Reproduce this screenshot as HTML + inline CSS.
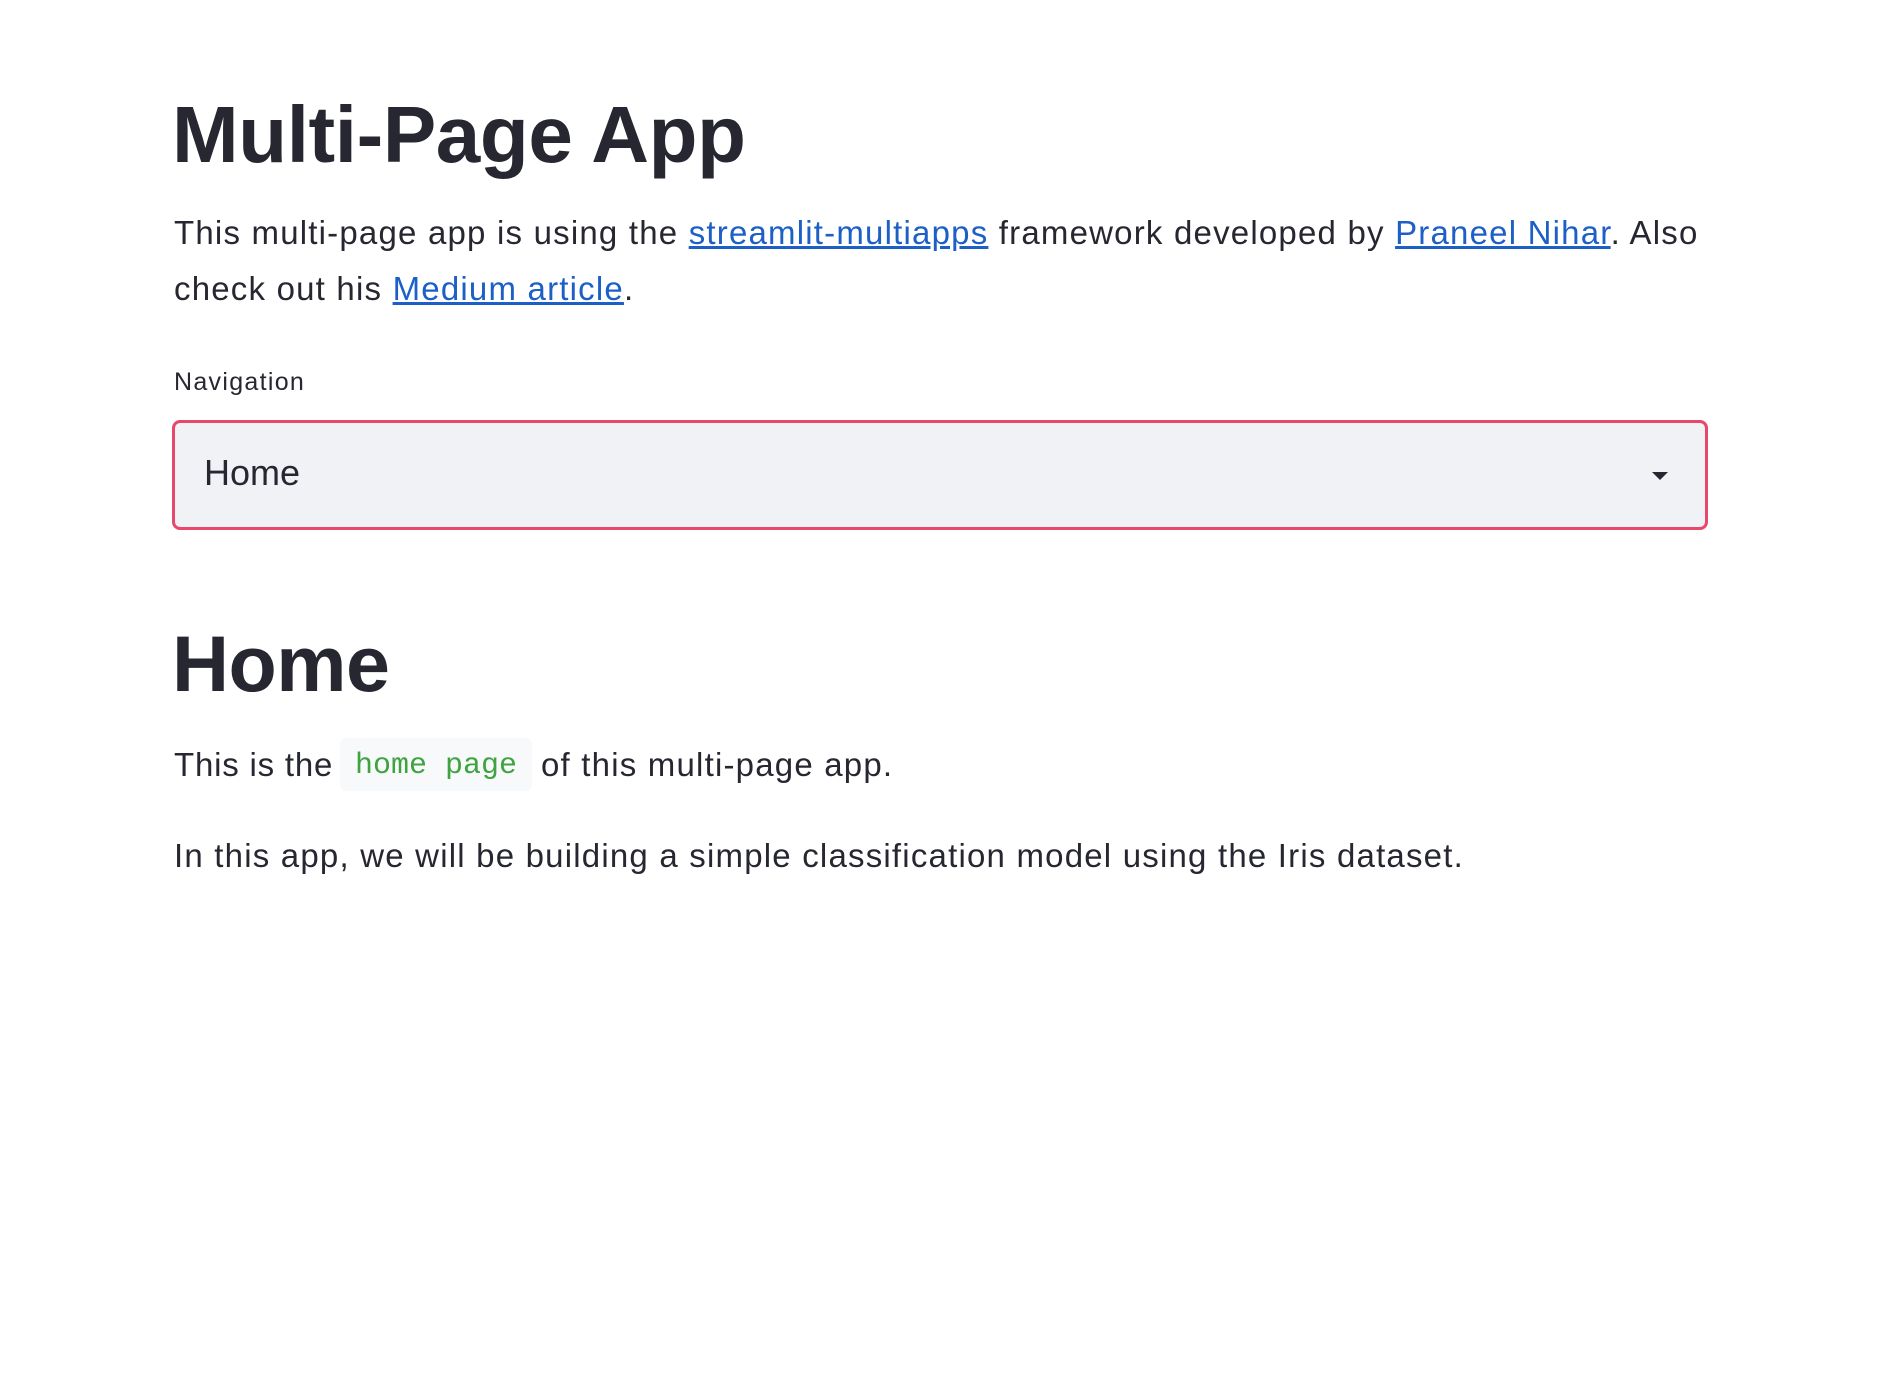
<!DOCTYPE html>
<html><head><meta charset="utf-8"><style>
body{margin:0;width:1900px;height:1400px;background:#fff;color:#262730;font-family:"Liberation Sans",sans-serif;position:relative;overflow:hidden}
.a{position:absolute;white-space:nowrap;line-height:1.117}
a{color:#1c5fc7;text-decoration:underline}
</style></head><body>
<div class="a" style="left:172px;top:90px;font-size:80px;font-weight:bold;letter-spacing:-0.4px">Multi-Page App</div>
<div class="a" style="left:174px;top:205px;font-size:33px;line-height:56px;letter-spacing:1.2px">This multi-page app is using the <a>streamlit-multiapps</a> framework developed by <a>Praneel Nihar</a>. Also<br>check out his <a>Medium article</a>.</div>
<div class="a" style="left:174px;top:369px;font-size:25px;letter-spacing:1.3px">Navigation</div>
<div style="position:absolute;left:172px;top:420px;width:1530px;height:104px;border:3px solid #e8486b;border-radius:8px;background:#f0f2f6"></div>
<div class="a" style="left:204px;top:453px;font-size:36px">Home</div>
<svg style="position:absolute;left:1652px;top:472px" width="16" height="8"><path d="M0 0H16L8 8Z" fill="#262730"/></svg>
<div class="a" style="left:172px;top:620px;font-size:79px;font-weight:bold;letter-spacing:-0.5px">Home</div>
<div class="a" style="left:174px;top:747px;font-size:33px;letter-spacing:0.8px">This is the</div>
<div style="position:absolute;left:340px;top:738px;width:192px;height:53px;background:#f8f9fb;border-radius:6px"></div>
<div class="a" style="left:355px;top:750px;font-size:30px;font-family:'Liberation Mono',monospace;color:#3fa33f">home page</div>
<div class="a" style="left:541px;top:747px;font-size:33px;letter-spacing:1.2px">of this multi-page app.</div>
<div class="a" style="left:174px;top:838px;font-size:33px;letter-spacing:1.2px">In this app, we will be building a simple classification model using the Iris dataset.</div>
</body></html>
